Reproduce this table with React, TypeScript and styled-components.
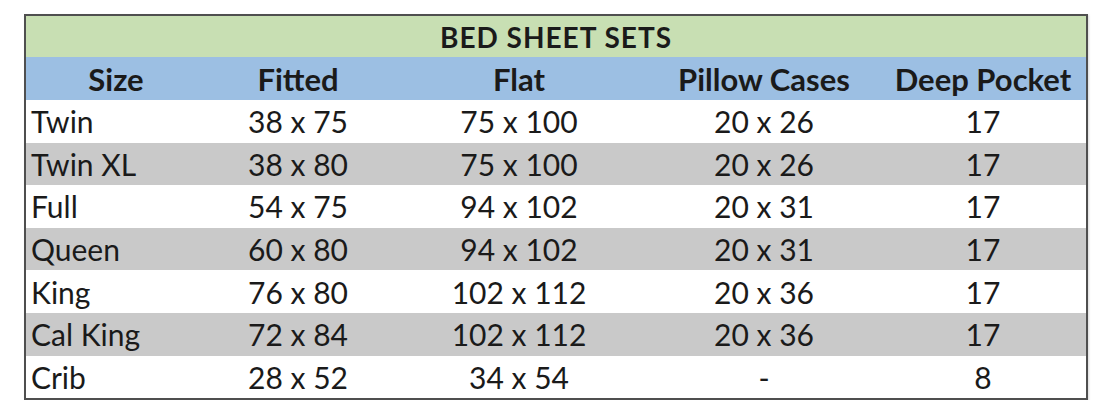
import styled, { createGlobalStyle } from "styled-components";

const GlobalStyle = createGlobalStyle`
  body {
    margin: 0;
    background: #ffffff;
    font-family: "Lato", "Liberation Sans", sans-serif;
  }
`;

const rows = [
  ["Twin", "38 x 75", "75 x 100", "20 x 26", "17"],
  ["Twin XL", "38 x 80", "75 x 100", "20 x 26", "17"],
  ["Full", "54 x 75", "94 x 102", "20 x 31", "17"],
  ["Queen", "60 x 80", "94 x 102", "20 x 31", "17"],
  ["King", "76 x 80", "102 x 112", "20 x 36", "17"],
  ["Cal King", "72 x 84", "102 x 112", "20 x 36", "17"],
  ["Crib", "28 x 52", "34 x 54", "-", "8"],
];

const headers = ["Size", "Fitted", "Flat", "Pillow Cases", "Deep Pocket"];

export default function App() {
  return (
    <>
      <GlobalStyle />
      <Page>
        <Table>
          <Title>BED SHEET SETS</Title>
          <HeadRow>
            {headers.map((h) => (
              <HeadCell key={h}>{h}</HeadCell>
            ))}
          </HeadRow>
          {rows.map((r, i) => (
            <Row key={r[0]} $shaded={i % 2 === 1}>
              {r.map((c, j) => (
                <Cell key={j} $left={j === 0}>
                  {c}
                </Cell>
              ))}
            </Row>
          ))}
        </Table>
      </Page>
    </>
  );
}

const Page = styled.div`
  padding: 14px 0 0 24px;
`;

const Table = styled.div`
  width: 1060px;
  border: 2px solid #4f4f4f;
  box-shadow: 1px 1px 2px rgba(0, 0, 0, 0.15);
  color: #1a1a1a;
`;

const Title = styled.div`
  height: 41px;
  background: #c8dfb3;
  display: flex;
  align-items: center;
  justify-content: center;
  font-weight: 700;
  font-size: 28px;
  letter-spacing: 1px;
`;

const Grid = styled.div`
  display: grid;
  grid-template-columns: 180px 184px 258px 232px 206px;
  align-items: center;
`;

const HeadRow = styled(Grid)`
  height: 43px;
  background: #9cbfe3;
  font-weight: 700;
  font-size: 31px;
`;

const HeadCell = styled.div`
  text-align: center;
`;

const Row = styled(Grid)<{ $shaded: boolean }>`
  height: 42.6px;
  background: ${(p) => (p.$shaded ? "#c9c9c9" : "#ffffff")};
  font-size: 30px;
`;

const Cell = styled.div<{ $left: boolean }>`
  text-align: ${(p) => (p.$left ? "left" : "center")};
  padding-left: ${(p) => (p.$left ? "5px" : "0")};
`;
